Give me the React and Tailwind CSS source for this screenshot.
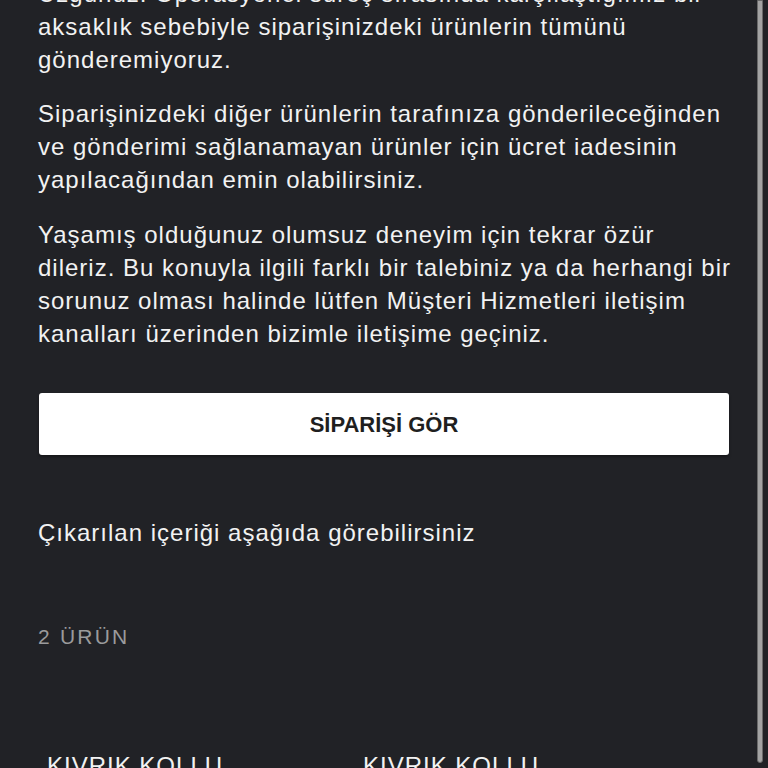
import React from 'react';

const body = "font-['Liberation_Sans',Arial,sans-serif] text-[24px] leading-[33px] tracking-[1px] text-[#f2f2f2]";

const App = () => {
  return (
    <div className="relative h-[768px] w-[768px] overflow-hidden bg-[#212226]">
      <div className="pl-[38px] pr-[33px] -mt-[23px]">
        {/* message paragraphs */}
        <p className={body}>
          Üzgünüz. Operasyonel süreç sırasında karşılaştığımız bir aksaklık sebebiyle siparişinizdeki ürünlerin tümünü gönderemiyoruz.
        </p>
        <p className={`${body} mt-[21px]`}>
          Siparişinizdeki diğer ürünlerin tarafınıza gönderileceğinden ve gönderimi sağlanamayan ürünler için ücret iadesinin yapılacağından emin olabilirsiniz.
        </p>
        <p className={`${body} mt-[22px]`}>
          Yaşamış olduğunuz olumsuz deneyim için tekrar özür dileriz. Bu konuyla ilgili farklı bir talebiniz ya da herhangi bir sorunuz olması halinde lütfen Müşteri Hizmetleri iletişim kanalları üzerinden bizimle iletişime geçiniz.
        </p>

        <button className="mx-px mt-[43px] flex h-[62px] w-[690px] items-center justify-center rounded-[3px] bg-white shadow-[0_2px_3px_rgba(0,0,0,0.35)]">
          <span className="font-['Liberation_Sans',Arial,sans-serif] text-[22px] font-bold text-[#1f1f1f]">
            SİPARİŞİ GÖR
          </span>
        </button>

        <p className={`${body} mt-[61px]`}>Çıkarılan içeriği aşağıda görebilirsiniz</p>

        <div className="mt-[74px] font-['Liberation_Sans',Arial,sans-serif] text-[21px] leading-[28px] tracking-[2.2px] text-[#9b9b9c]">
          2 ÜRÜN
        </div>

        {/* product list */}
        <div className="mt-[98px] grid grid-cols-[316px_316px]">
          <div className="px-[9px]">
            <p className={`${body} w-[250px]`}>KIVRIK KOLLU GÖMLEK</p>
          </div>
          <div className="px-[9px]">
            <p className={`${body} w-[250px]`}>KIVRIK KOLLU GÖMLEK</p>
          </div>
        </div>
      </div>

      {/* scrollbar thumb */}
      <div className="absolute right-[5px] top-0 h-[763px] w-[6px] rounded-b-full border border-[#6a6a6a] bg-[#a3a3a3]" />
    </div>
  );
};

export default App;
